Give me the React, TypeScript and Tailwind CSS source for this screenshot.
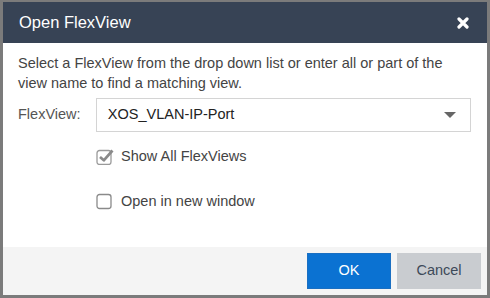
import React from "react";

export default function App() {
  return (
    <div
      className="w-[490px] h-[298px] bg-[#7b7b7b] pl-[3px] pr-[3px] pt-[2px] pb-[3px] flex flex-col"
      style={{ fontFamily: '"Liberation Sans", Arial, sans-serif' }}
    >
      <div className="h-[41px] bg-[#374355] flex items-center justify-between pl-[16px] pr-[18px]">
        <span className="text-white text-[16.5px] leading-none">Open FlexView</span>
        <svg width="12" height="12" viewBox="0 0 12 12">
          <path d="M2 2 L10 10 M10 2 L2 10" stroke="#ffffff" strokeWidth="3.2" strokeLinecap="round" />
        </svg>
      </div>
      <div className="flex-1 bg-white flex flex-col">
        <div className="flex-1 pl-[15px] pr-[16px] pt-[10px] text-[#444]">
          <p className="text-[14.5px] leading-[20px]">
            Select a FlexView from the drop down list or enter all or part of the view name to find a matching view.
          </p>
          <div className="flex items-center mt-[5px]">
            <span className="w-[78px] text-[14.5px] text-[#555]">FlexView:</span>
            <div className="w-[376px] h-[34px] border border-[#d4d4d4] flex items-center justify-between pl-[11px] pr-[14px]">
              <span className="text-[14.5px] text-[#222]">XOS_VLAN-IP-Port</span>
              <svg width="12" height="7" viewBox="0 0 12 7">
                <path d="M0 0 L12 0 L6 6 Z" fill="#666" />
              </svg>
            </div>
          </div>
          <div className="ml-[78px] mt-[14px] flex items-center gap-[7px]">
            <svg width="18" height="17" viewBox="0 0 18 17">
              <rect x="1" y="2.5" width="14" height="14" rx="2.5" fill="none" stroke="#9a9a9a" strokeWidth="1.3" />
              <path d="M4 9 L7.8 12.3 L16.5 2.5" fill="none" stroke="#8a8a8a" strokeWidth="2.7" strokeLinejoin="round" />
            </svg>
            <span className="text-[14.5px] text-[#444]">Show All FlexViews</span>
          </div>
          <div className="ml-[78px] mt-[23px] flex items-center gap-[7px]">
            <svg width="18" height="17" viewBox="0 0 18 17">
              <rect x="1" y="1.5" width="14" height="14" rx="2.5" fill="none" stroke="#8a8a8a" strokeWidth="1.3" />
            </svg>
            <span className="text-[14.5px] text-[#444]">Open in new window</span>
          </div>
        </div>
        <div className="h-[48px] bg-[#f4f4f4] flex items-center justify-end gap-[6px] pr-[6px]">
          <button className="w-[84px] h-[36px] bg-[#0b72d2] text-white text-[14.5px] border border-[#1a6fc2]">OK</button>
          <button className="w-[84px] h-[36px] bg-[#c9ccd0] text-[#3d4a59] text-[14.5px]">Cancel</button>
        </div>
      </div>
    </div>
  );
}
